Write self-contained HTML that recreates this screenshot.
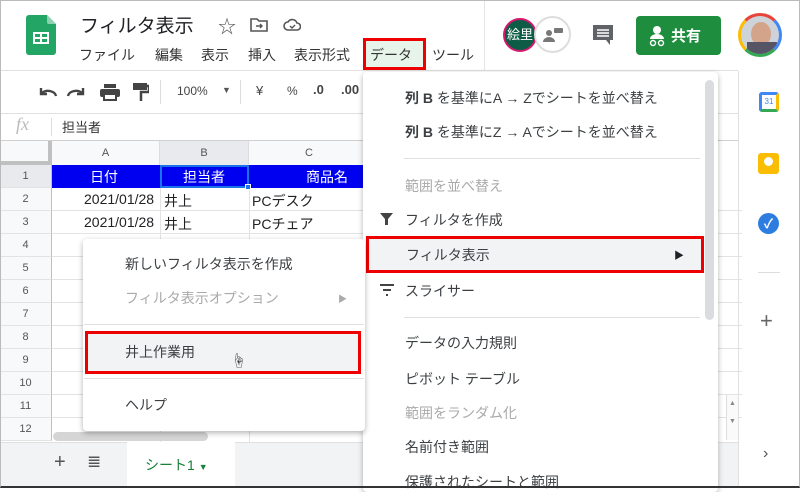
<!DOCTYPE html>
<html><head><meta charset="utf-8"><style>
*{box-sizing:border-box;margin:0;padding:0}
body{width:800px;height:488px;overflow:hidden;position:relative;background:#fff;font-family:"Liberation Sans","Noto Sans CJK JP",sans-serif;color:#202124}
.a{position:absolute}
.t{position:absolute;white-space:nowrap}
.menu{font-size:14px;color:#333}
.rh{position:absolute;left:0;width:52px;height:23px;border-bottom:1px solid #e2e3e3;border-right:1px solid #c0c0c0;background:#f8f9fa;font-size:11px;color:#555;text-align:center;line-height:23px}
.hl{position:absolute;left:52px;width:690px;height:1px;background:#e2e3e3}
.mi{position:absolute;font-size:14px;color:#3c4043;white-space:nowrap}
.g{color:#aaa}
</style></head><body>
<div class="a" style="left:0;top:0;width:800px;height:488px;border:1px solid #bbb;border-bottom:2px solid #333;z-index:50;pointer-events:none"></div>
<svg class="a" style="left:26px;top:15px" width="30" height="40" viewBox="0 0 30 40"><path d="M3 0h18l9 9v28a3 3 0 0 1-3 3H3a3 3 0 0 1-3-3V3a3 3 0 0 1 3-3z" fill="#23a566"/><path d="M21 0l9 9h-7a2 2 0 0 1-2-2z" fill="#8ed1b1"/><rect x="7" y="17" width="16" height="12" fill="#fff"/><rect x="9" y="19" width="5" height="3" fill="#23a566"/><rect x="16" y="19" width="5" height="3" fill="#23a566"/><rect x="9" y="24" width="5" height="3" fill="#23a566"/><rect x="16" y="24" width="5" height="3" fill="#23a566"/></svg>
<div class="t" style="left:80px;top:11px;font-size:19px;color:#202124">フィルタ表示</div>
<div class="t" style="left:218px;top:13px;font-size:18px;color:#555">☆</div>
<svg class="a" style="left:250px;top:17px" width="18" height="15"><path d="M1 2h6l2 2h8v10H1z" fill="none" stroke="#555" stroke-width="1.6"/><path d="M6 9h6M10 7l2 2-2 2" stroke="#555" stroke-width="1.4" fill="none"/></svg>
<svg class="a" style="left:283px;top:18px" width="18" height="14"><path d="M5 12a4 4 0 0 1 0-8 5 5 0 0 1 9 1 3.5 3.5 0 0 1 0 7z" fill="none" stroke="#555" stroke-width="1.6"/><path d="M7 8l2 2 3-3" stroke="#555" stroke-width="1.4" fill="none"/></svg>
<div class="t menu" style="left:79px;top:45px">ファイル</div>
<div class="t menu" style="left:155px;top:45px">編集</div>
<div class="t menu" style="left:201px;top:45px">表示</div>
<div class="t menu" style="left:248px;top:45px">挿入</div>
<div class="t menu" style="left:294px;top:45px">表示形式</div>
<div class="a" style="left:363px;top:38px;width:63px;height:32px;background:#e6f4ea;border:3px solid #e00"></div>
<div class="t menu" style="left:370px;top:45px">データ</div>
<div class="t menu" style="left:432px;top:45px">ツール</div>
<div class="a" style="left:484px;top:0;width:1px;height:70px;background:#e5e5e5"></div>
<div class="a" style="left:503px;top:18px;width:34px;height:34px;border-radius:50%;background:#0d5c45;border:2px solid #d6186e;color:#fff;font-size:13px;line-height:30px;text-align:center">絵里</div>
<div class="a" style="left:534px;top:16px;width:37px;height:37px;border-radius:50%;background:#fff;border:2px solid #ddd"></div>
<svg class="a" style="left:542px;top:26px" width="22" height="18"><circle cx="7" cy="7" r="3" fill="#777"/><path d="M1 16a6 5 0 0 1 12 0z" fill="#777"/><rect x="12" y="2" width="9" height="5" rx="1" fill="#777"/></svg>
<svg class="a" style="left:592px;top:24px" width="22" height="22"><path d="M1 1h20v15h-3v5l-4-5H1z" fill="#5f6368"/><path d="M5 6h12M5 9h12M5 12h12" stroke="#fff" stroke-width="1.5"/></svg>
<div class="a" style="left:636px;top:16px;width:85px;height:39px;background:#1e8e3e;border-radius:4px"></div>
<svg class="a" style="left:648px;top:25px" width="18" height="22"><circle cx="9" cy="5" r="4" fill="#fff"/><path d="M2 14a7 5 0 0 1 14 0z" fill="#fff"/><circle cx="5" cy="18" r="2.5" fill="none" stroke="#fff" stroke-width="1.4"/><circle cx="13" cy="18" r="2.5" fill="none" stroke="#fff" stroke-width="1.4"/></svg>
<div class="t" style="left:671px;top:25px;font-size:15px;color:#fff;font-weight:bold">共有</div>
<div class="a" style="left:738px;top:13px;width:44px;height:44px;border-radius:50%;border:3px solid;border-color:#e8443a #4285f4 #34a853 #fbbc04;background:#cdd3d8;overflow:hidden"><div style="position:absolute;left:10px;top:6px;width:20px;height:24px;border-radius:50%;background:#d4a48a"></div><div style="position:absolute;left:6px;top:26px;width:30px;height:20px;background:#556"></div></div>
<div class="a" style="left:0;top:70px;width:738px;height:1px;background:#e0e0e0"></div>
<svg class="a" style="left:38px;top:84px" width="50" height="16"><path d="M3 4v6h6" stroke="#444" stroke-width="2.4" fill="none"/><path d="M4 9a8 6 0 0 1 14 3" stroke="#444" stroke-width="2.4" fill="none"/><path d="M45 4v6h-6" stroke="#444" stroke-width="2.4" fill="none"/><path d="M44 9a8 6 0 0 0-14 3" stroke="#444" stroke-width="2.4" fill="none"/></svg>
<svg class="a" style="left:100px;top:84px" width="20" height="17"><rect x="4" y="0" width="12" height="4" fill="#444"/><rect x="0" y="5" width="20" height="8" rx="2" fill="#444"/><rect x="4" y="10" width="12" height="6" fill="#fff" stroke="#444" stroke-width="2"/></svg>
<svg class="a" style="left:133px;top:83px" width="16" height="19"><rect x="0" y="0" width="14" height="7" fill="#444"/><path d="M14 3h2v6H8v9" stroke="#444" stroke-width="2.5" fill="none"/></svg>
<div class="a" style="left:160px;top:80px;width:1px;height:24px;background:#ddd"></div>
<div class="t" style="left:177px;top:84px;font-size:12px;color:#444">100%</div>
<div class="t" style="left:222px;top:85px;font-size:9px;color:#555">▼</div>
<div class="a" style="left:240px;top:80px;width:1px;height:24px;background:#ddd"></div>
<div class="t" style="left:256px;top:83px;font-size:13px;color:#444">¥</div>
<div class="t" style="left:287px;top:84px;font-size:12px;color:#444">%</div>
<div class="t" style="left:313px;top:82px;font-size:13px;color:#444;font-weight:bold">.0</div>
<div class="t" style="left:341px;top:82px;font-size:13px;color:#444;font-weight:bold">.00</div>
<div class="a" style="left:0;top:113px;width:738px;height:1px;background:#e0e0e0"></div>
<div class="t" style="left:16px;top:114px;font-size:18px;color:#bbb;font-style:italic;font-family:'Liberation Serif',serif">fx</div>
<div class="a" style="left:51px;top:118px;width:1px;height:18px;background:#ddd"></div>
<div class="t" style="left:62px;top:117px;font-size:13px;color:#333">担当者</div>
<div class="a" style="left:0;top:140px;width:738px;height:1px;background:#d0d0d0"></div>
<div class="a" style="left:0;top:141px;width:52px;height:24px;background:#f8f9fa;border-right:4px solid #c0c0c0;border-bottom:4px solid #c0c0c0"></div>
<div class="a" style="left:52px;top:141px;width:108px;height:24px;background:#f8f9fa;border-right:1px solid #ddd;text-align:center;font-size:11px;color:#555;line-height:24px">A</div>
<div class="a" style="left:160px;top:141px;width:89px;height:24px;background:#e8eaed;border-right:1px solid #ddd;text-align:center;font-size:11px;color:#555;line-height:24px">B</div>
<div class="a" style="left:249px;top:141px;width:120px;height:24px;background:#f8f9fa;text-align:center;font-size:11px;color:#555;line-height:24px">C</div>
<div class="rh" style="top:165px;background:#e8eaed">1</div>
<div class="rh" style="top:188px">2</div><div class="rh" style="top:211px">3</div><div class="rh" style="top:234px">4</div><div class="rh" style="top:257px">5</div><div class="rh" style="top:280px">6</div><div class="rh" style="top:303px">7</div><div class="rh" style="top:326px">8</div><div class="rh" style="top:349px">9</div><div class="rh" style="top:372px">10</div><div class="rh" style="top:395px">11</div><div class="rh" style="top:418px">12</div>
<div class="hl" style="top:210px"></div><div class="hl" style="top:233px"></div><div class="hl" style="top:256px"></div><div class="hl" style="top:279px"></div><div class="hl" style="top:302px"></div><div class="hl" style="top:325px"></div><div class="hl" style="top:348px"></div><div class="hl" style="top:371px"></div><div class="hl" style="top:394px"></div><div class="hl" style="top:417px"></div>
<div class="a" style="left:160px;top:188px;width:1px;height:254px;background:#e2e3e3"></div>
<div class="a" style="left:249px;top:188px;width:1px;height:254px;background:#e2e3e3"></div>
<div class="a" style="left:52px;top:165px;width:320px;height:23px;background:#0000f0"></div>
<div class="t" style="left:90px;top:167px;font-size:14px;color:#fff">日付</div>
<div class="a" style="left:160px;top:165px;width:89px;height:23px;border:2px solid #1a73e8"></div>
<div class="t" style="left:183px;top:167px;font-size:14px;color:#fff">担当者</div>
<div class="a" style="left:245px;top:184px;width:6px;height:6px;background:#1a73e8;border:1px solid #fff"></div>
<div class="t" style="left:306px;top:167px;font-size:14px;color:#fff">商品名</div>
<div class="t" style="left:84px;top:191px;font-size:14px">2021/01/28</div>
<div class="t" style="left:164px;top:191px;font-size:14px">井上</div>
<div class="t" style="left:252px;top:191px;font-size:14px">PCデスク</div>
<div class="t" style="left:84px;top:214px;font-size:14px">2021/01/28</div>
<div class="t" style="left:164px;top:214px;font-size:14px">井上</div>
<div class="t" style="left:252px;top:214px;font-size:14px">PCチェア</div>
<div class="a" style="left:53px;top:432px;width:155px;height:9px;border-radius:5px;background:#d5d5d5"></div>
<div class="a" style="left:0;top:442px;width:738px;height:44px;background:#f1f3f4;border-top:1px solid #e0e0e0"></div>
<div class="t" style="left:54px;top:451px;font-size:20px;color:#555">+</div>
<div class="t" style="left:87px;top:452px;font-size:17px;color:#555">≣</div>
<div class="a" style="left:127px;top:442px;width:108px;height:44px;background:#fff"></div>
<div class="t" style="left:145px;top:455px;font-size:14px;color:#188038">シート1 <span style="font-size:9px">▼</span></div>
<div class="a" style="left:738px;top:71px;width:1px;height:415px;background:#e0e0e0"></div>
<div class="a" style="left:759px;top:92px;width:20px;height:20px;border-radius:3px;background:#4285f4;border:3px solid;border-color:#4285f4 #fbbc04 #34a853 #4285f4"><div style="background:#fff;width:14px;height:14px;font-size:8px;color:#4285f4;text-align:center;line-height:14px">31</div></div>
<div class="a" style="left:758px;top:153px;width:21px;height:21px;border-radius:3px;background:#fbbc04"><div style="position:absolute;left:6px;top:4px;width:9px;height:9px;border-radius:50%;background:#fff"></div></div>
<div class="a" style="left:758px;top:213px;width:21px;height:21px;border-radius:50%;background:#2d7de0;color:#fff;font-size:13px;line-height:21px;text-align:center;font-weight:bold">✓</div>
<div class="a" style="left:758px;top:272px;width:22px;height:1px;background:#ddd"></div>
<div class="t" style="left:760px;top:308px;font-size:22px;color:#666">+</div>
<div class="t" style="left:763px;top:445px;font-size:16px;color:#555">›</div>
<div class="a" style="left:726px;top:395px;width:12px;height:45px;border-left:1px solid #ddd;font-size:7px;color:#888;text-align:center;line-height:18px;background:#fafafa">▲<br>▼</div>
<div class="a" style="left:363px;top:72px;width:355px;height:420px;background:#fff;box-shadow:0 2px 6px rgba(0,0,0,.3);border-radius:4px"></div>
<div class="a" style="left:705px;top:80px;width:9px;height:240px;border-radius:5px;background:#dadce0"></div>
<div class="mi" style="left:405px;top:88px"><b>列 B</b> を基準にA → Zでシートを並べ替え</div>
<div class="mi" style="left:405px;top:122px"><b>列 B</b> を基準にZ → Aでシートを並べ替え</div>
<div class="a" style="left:404px;top:158px;width:296px;height:1px;background:#e0e0e0"></div>
<div class="mi g" style="left:405px;top:176px">範囲を並べ替え</div>
<svg class="a" style="left:380px;top:213px" width="13" height="12"><path d="M0 0h13L8 6v6H5V6z" fill="#444"/></svg>
<div class="mi" style="left:405px;top:210px">フィルタを作成</div>
<div class="a" style="left:366px;top:236px;width:338px;height:37px;background:#f1f3f4;border:3px solid #e00"></div>
<div class="mi" style="left:406px;top:245px">フィルタ表示</div>
<div class="t" style="left:674px;top:247px;font-size:10px">▶</div>
<svg class="a" style="left:380px;top:284px" width="14" height="12"><path d="M0 1h14M3 6h8M6 11h2" stroke="#444" stroke-width="2"/></svg>
<div class="mi" style="left:405px;top:281px">スライサー</div>
<div class="a" style="left:404px;top:317px;width:296px;height:1px;background:#e0e0e0"></div>
<div class="mi" style="left:405px;top:333px">データの入力規則</div>
<div class="mi" style="left:405px;top:369px">ピボット テーブル</div>
<div class="mi g" style="left:405px;top:403px">範囲をランダム化</div>
<div class="mi" style="left:405px;top:437px">名前付き範囲</div>
<div class="mi" style="left:405px;top:472px">保護されたシートと範囲</div>
<div class="a" style="left:83px;top:239px;width:282px;height:192px;background:#fff;box-shadow:0 2px 6px rgba(0,0,0,.3);border-radius:4px"></div>
<div class="mi" style="left:125px;top:254px">新しいフィルタ表示を作成</div>
<div class="mi g" style="left:125px;top:288px">フィルタ表示オプション</div>
<div class="t" style="left:338px;top:292px;font-size:9px;color:#aaa">▶</div>
<div class="a" style="left:84px;top:324px;width:280px;height:1px;background:#e0e0e0"></div>
<div class="a" style="left:85px;top:331px;width:276px;height:43px;background:#f1f3f4;border:3px solid #e00"></div>
<div class="mi" style="left:125px;top:342px">井上作業用</div>
<div class="t" style="left:231px;top:350px;font-size:15px;color:#333">☝</div>
<div class="a" style="left:84px;top:378px;width:280px;height:1px;background:#e0e0e0"></div>
<div class="mi" style="left:125px;top:395px">ヘルプ</div>
</body></html>
